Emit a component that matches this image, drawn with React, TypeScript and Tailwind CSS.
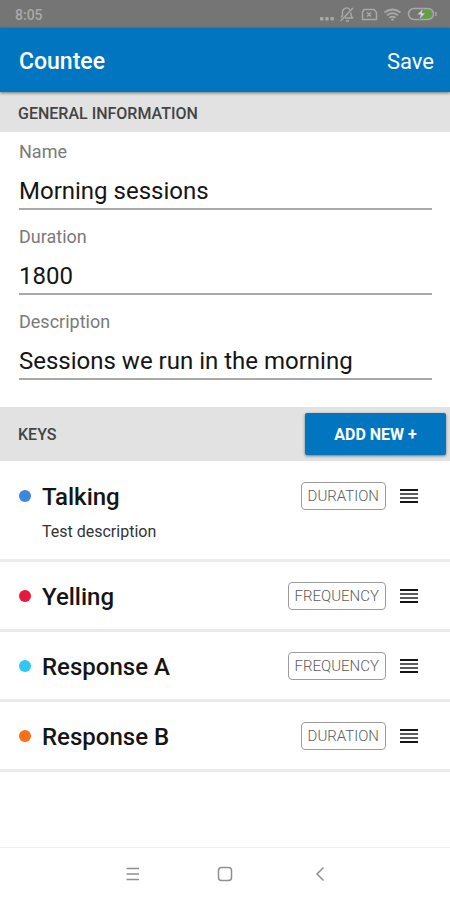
import { useState } from "react";

type KeyItem = {
  name: string;
  note?: string;
  kind: "DURATION" | "FREQUENCY";
  dot: string;
};

const keys: KeyItem[] = [
  { name: "Talking", note: "Test description", kind: "DURATION", dot: "bg-[#3b87dd]" },
  { name: "Yelling", kind: "FREQUENCY", dot: "bg-[#e6193c]" },
  { name: "Response A", kind: "FREQUENCY", dot: "bg-[#2fc8f6]" },
  { name: "Response B", kind: "DURATION", dot: "bg-[#fb6f15]" },
];

function StatusBar() {
  return (
    <div className="flex h-7 items-center justify-between bg-[#757575] pr-3 pl-[15px] text-[#a9a9a9]">
      <span className="pt-0.5 text-sm font-medium">8:05</span>
      <svg width="120" height="18" viewBox="0 0 120 18" fill="none" stroke="currentColor" strokeWidth="1.5" aria-hidden="true">
        <g fill="currentColor" stroke="none">
          <rect x="2" y="12" width="3.500" height="3.500" rx="1" />
          <rect x="7.200" y="12" width="3.500" height="3.500" rx="1" />
          <rect x="12.400" y="12" width="3.500" height="3.500" rx="1" />
        </g>
        <path d="M32 5a4 4 0 0 0-7.500 2v3.500L23 12.500M33 7.500v3l1.500 2.500H27M28 16h3M22.500 16L35 3" strokeWidth="1.4" />
        <path d="M46 4.500h10l2.500 3v7h-14V7z M49 7.500l4 4M53 7.500l-4 4" strokeLinejoin="round" />
        <path d="M66.500 7.500q8-6 16 0M69 10.200q5.500-4 11 0M71.500 12.700q3-2.200 6 0" strokeWidth="1.8" />
        <circle cx="74.500" cy="14.500" r="1.200" fill="currentColor" stroke="none" />
        <path d="M103 4h6.500a5 5 0 0 1 0 10h-6.500z" fill="#62a044" stroke="none" />
        <rect x="90.500" y="3.500" width="25" height="11" rx="5.500" />
        <path d="M118 7v4" />
        <path d="M105 3.500L99 9.700h3.500L101.500 14.500l6-6.500h-3.500z" fill="#d4d4d4" stroke="#757575" strokeWidth="0.500" />
      </svg>
    </div>
  );
}

function Field({ id, label, initial }: { id: string; label: string; initial: string }) {
  const [value, setValue] = useState(initial);
  return (
    <div>
      <label htmlFor={id} className="block text-lg leading-6 text-[#7a7a7a]">
        {label}
      </label>
      <input
        id={id}
        type="text"
        value={value}
        onChange={(e) => setValue(e.target.value)}
        className="mt-2 block h-[38px] w-full border-b-2 border-[#a9a9a9] bg-transparent px-0 pt-0.5 text-2xl text-[#151515] outline-none"
      />
    </div>
  );
}

function KeyRow({ item }: { item: KeyItem }) {
  return (
    <li className="border-b-3 border-[#ebebeb] pt-4 pr-8 pb-[15px] pl-[19px]">
      <div className="flex h-9 items-center">
        <span className={`size-3 shrink-0 rounded-full ${item.dot}`} />
        <h3 className="ml-[11px] flex-1 pt-0.5 text-2xl leading-8 font-medium text-[#151515]">{item.name}</h3>
        <span className="flex h-7 items-center rounded-sm border border-[#9c9c9c] px-1.5 text-[15px] font-light text-[#5c5c5c]">
          {item.kind}
        </span>
        <button type="button" aria-label={`Reorder ${item.name}`} className="ml-3.5">
          <svg width="18" height="16" viewBox="0 0 18 16" aria-hidden="true">
            <path d="M0 2h18M0 14h18" stroke="#151515" strokeWidth="2" />
            <path d="M0 6h18M0 10h18" stroke="#5c5c5c" strokeWidth="2" />
          </svg>
        </button>
      </div>
      {item.note && <p className="mt-1.5 ml-[23px] text-base leading-6 text-[#333333]">{item.note}</p>}
    </li>
  );
}

export default function App() {
  return (
    <div className="flex min-h-screen flex-col bg-white font-['Roboto',sans-serif]">
      <StatusBar />
      <header className="relative flex h-16 items-center justify-between bg-[#0275c0] pt-0.5 pr-4 pl-[19px] text-white shadow-[0_1px_3px_rgba(0,0,0,0.5)]">
        <h1 className="pt-0.5 text-[23px] font-medium">Countee</h1>
        <button type="button" className="text-[22px]">
          Save
        </button>
      </header>
      <main className="flex-1">
        <h2 className="flex h-10 items-center bg-[#e2e2e2] pt-1 pl-[18px] text-base font-medium text-[#444444]">
          GENERAL INFORMATION
        </h2>
        <form className="flex flex-col gap-[15px] pt-2 pr-[18px] pb-[27px] pl-[19px]">
          <Field id="name" label="Name" initial="Morning sessions" />
          <Field id="duration" label="Duration" initial="1800" />
          <Field id="description" label="Description" initial="Sessions we run in the morning" />
        </form>
        <div className="flex h-[54px] items-center justify-between bg-[#e2e2e2] pr-1 pl-[18px]">
          <h2 className="pt-0.5 text-base font-medium text-[#444444]">KEYS</h2>
          <button
            type="button"
            className="h-[42px] w-[141px] rounded-xs bg-[#0275c0] pt-0.5 text-base font-bold text-white shadow-[0_1px_3px_rgba(0,0,0,0.5)]"
          >
            ADD NEW +
          </button>
        </div>
        <ul className="pt-px">
          {keys.map((item) => (
            <KeyRow key={item.name} item={item} />
          ))}
        </ul>
      </main>
      <nav className="flex h-[53px] items-center justify-center gap-[76px] border-t border-[#f0f0f0] text-[#8f8f8f]">
        <button type="button" aria-label="Recent apps">
          <svg width="18" height="18" viewBox="0 0 18 18" fill="none" stroke="currentColor" strokeWidth="1.500" aria-hidden="true">
            <path d="M4.500 3.500h12.500M4.500 9h12.500M4.500 14.500h12.500" />
          </svg>
        </button>
        <button type="button" aria-label="Home">
          <svg width="18" height="18" viewBox="0 0 18 18" fill="none" stroke="currentColor" strokeWidth="1.500" aria-hidden="true">
            <rect x="2.500" y="2.500" width="13" height="13" rx="3" />
          </svg>
        </button>
        <button type="button" aria-label="Back">
          <svg width="18" height="18" viewBox="0 0 18 18" fill="none" stroke="currentColor" strokeWidth="1.500" aria-hidden="true">
            <path d="M13.500 2.500L7 9l6.500 6.500" />
          </svg>
        </button>
      </nav>
    </div>
  );
}
